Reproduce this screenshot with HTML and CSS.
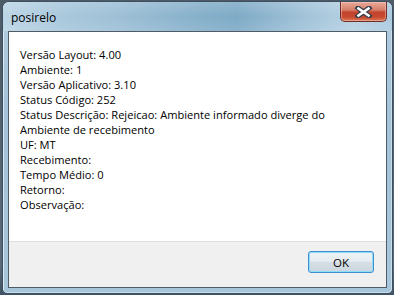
FILE: index.html
```html
<!DOCTYPE html>
<html>
<head>
<meta charset="utf-8">
<link rel="stylesheet" href="styles.css">
</head>
<body>
<div class="window">
  <div class="titlebar">
    <span class="title">posirelo</span>
    <div class="close">
      <svg width="19" height="12" viewBox="0 0 19 12">
        <path d="M4 2 L15 10 M15 2 L4 10" stroke="#3a3f48" stroke-width="5" stroke-linecap="square"/>
        <path d="M4.5 2.5 L14.5 9.5 M14.5 2.5 L4.5 9.5" stroke="#ffffff" stroke-width="2.6" stroke-linecap="square"/>
      </svg>
    </div>
  </div>
  <div class="client">
    <div class="content">
      <p>Versão Layout: 4.00</p>
      <p>Ambiente: 1</p>
      <p>Versão Aplicativo: 3.10</p>
      <p>Status Código: 252</p>
      <p>Status Descrição: Rejeicao: Ambiente informado diverge do Ambiente de recebimento</p>
      <p>UF: MT</p>
      <p>Recebimento:</p>
      <p>Tempo Médio: 0</p>
      <p>Retorno:</p>
      <p>Observação:</p>
    </div>
    <div class="footer">
      <button class="ok">OK</button>
    </div>
  </div>
</div>
</body>
</html>
```
FILE: styles.css
```css
html, body {
  margin: 0;
  padding: 0;
}
body {
  width: 394px;
  height: 295px;
  background: linear-gradient(180deg, #4d5b68 0%, #5a6a78 90%, #3f5366 100%);
  overflow: hidden;
  font-family: "Open Sans", "Noto Sans", sans-serif;
}
.window {
  margin: 1px 0 0 2px;
  width: 379px;
  height: 286px;
  border: 1px solid #3e4f5f;
  border-radius: 7px 7px 5px 5px;
  background: linear-gradient(180deg, #b0cce0 0%, #a4c3d9 40%, #a7c6dc 100%);
  display: flex;
  flex-direction: column;
  padding: 0 5px 5px 5px;
  box-sizing: content-box;
  box-shadow: inset 1px 1px 0 rgba(255,255,255,0.6), inset -1px -1px 0 rgba(255,255,255,0.4);
}
.titlebar {
  height: 29px;
  display: flex;
  align-items: center;
  position: relative;
  background:
    linear-gradient(180deg, rgba(255,255,255,0.15) 0%, rgba(255,255,255,0) 50%, rgba(255,255,255,0.1) 100%),
    linear-gradient(90deg, #bcd5e6 0%, #a9c8dc 15%, #9dbfd6 30%, #86b0ca 50%, #7eaac6 60%, #a2c3d9 78%, #b7d1e3 90%, #adcadf 100%);
  border-radius: 6px 6px 0 0;
  margin: 0 -5px;
  padding: 0 5px;
}
.title {
  font-size: 12px;
  color: #000;
  margin-left: 3px;
  margin-top: 1px;
}
.close {
  position: absolute;
  right: 5px;
  top: 0;
  width: 45px;
  height: 19px;
  border: 1px solid #6b2f26;
  border-top: none;
  border-radius: 0 0 5px 5px;
  background: linear-gradient(180deg, #e9a99a 0%, #d7826d 40%, #c2432b 55%, #c84b30 80%, #dc7a5a 100%);
  box-shadow: inset 0 0 0 1px rgba(255,210,200,0.45);
  display: flex;
  align-items: center;
  justify-content: center;
}
.close svg {
  display: block;
}
.client {
  flex: 1;
  border: 1px solid #4f5b66;
  background: #f0f0f0;
  display: flex;
  flex-direction: column;
}
.content {
  background: #fff;
  height: 210px;
  border-bottom: 1px solid #dfdfdf;
  padding: 15px 11px 0 11px;
  box-sizing: border-box;
}
.content p {
  margin: 0;
  font-size: 11.1px;
  line-height: 15px;
  color: #000;
  width: 318px;
}
.footer {
  flex: 1;
  display: flex;
  justify-content: flex-end;
  align-items: flex-start;
  padding: 9px 12px 0 0;
}
.ok {
  width: 66px;
  height: 22px;
  border: 1px solid #3c8fd0;
  border-radius: 3px;
  background: linear-gradient(180deg, #eef2f5 0%, #e6ecf1 45%, #d6dee5 52%, #ccd6df 100%);
  box-shadow: inset 0 0 0 1px #8fdcf8;
  font-family: "Open Sans", "Noto Sans", sans-serif;
  font-size: 11.5px;
  color: #000;
  padding: 0;
  margin: 0;
}
```
